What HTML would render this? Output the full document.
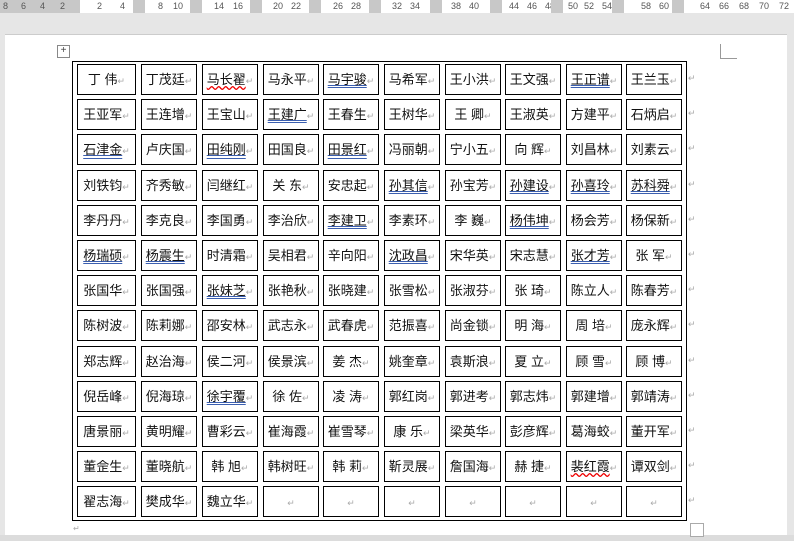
<!DOCTYPE html><html><head><meta charset="utf-8"><style>
body{margin:0;width:794px;height:541px;overflow:hidden;background:#e6e6e6;position:relative;font-family:"Liberation Sans","Noto Sans CJK SC",sans-serif}
#ruler{position:absolute;left:0;top:0;width:794px;height:13px;background:#fff;font-size:9px;color:#555;white-space:nowrap;overflow:hidden}
#ruler span{position:absolute;top:0;line-height:12px}
#ruler b{position:absolute;top:0;height:13px;width:12px;background:#c8c8c8}
#page{position:absolute;left:5px;top:34px;width:782px;height:500px;background:#fff;border-top:1px solid #ccc}
#tbl{position:absolute;left:72px;top:61px;width:615px;height:460px;border:1px solid #000;box-sizing:border-box}
.c{position:absolute;width:57px;height:31px;border:1px solid #000;box-sizing:border-box;font-size:13px;line-height:29px;text-align:center;color:#111;white-space:nowrap}
.c i{font-style:normal;color:#aaa;font-size:9px}
.r{position:absolute;left:688px;color:#aaa;font-size:9px}
.b{text-decoration:underline double #3b5fb0}
.w{text-decoration:underline wavy #e00}
#status{position:absolute;left:0;top:535px;width:794px;height:6px;background:#dcdcdc}
</style></head><body>
<div id="ruler"></div>
<div id="page"></div>
<div style="position:absolute;left:57px;top:45px;width:11px;height:11px;border:1px solid #888;font-size:10px;line-height:10px;text-align:center;color:#444">+</div>
<div style="position:absolute;left:720px;top:44px;width:16px;height:14px;border-left:1px solid #999;border-bottom:1px solid #999"></div>
<div id="tbl"></div>
<div id="cells"></div>
<div id="status"></div>
<script>
var rh='<div style="position:absolute;left:0;top:0;width:80px;height:13px;background:#c8c8c8"></div>';
[[3,"8"],[21,"6"],[40,"4"],[60,"2"],[97,"2"],[120,"4"],[158,"8"],[173,"10"],[214,"14"],[233,"16"],[273,"20"],[291,"22"],[333,"26"],[351,"28"],[392,"32"],[410,"34"],[451,"38"],[469,"40"],[509,"44"],[527,"46"],[545,"48"],[568,"50"],[584,"52"],[602,"54"],[641,"58"],[659,"60"],[700,"64"],[719,"66"],[739,"68"],[759,"70"],[779,"72"]].forEach(function(a){rh+='<span style="left:'+a[0]+'px">'+a[1]+'</span>';});
[66,133,190,250,309,369,430,490,551,612,672].forEach(function(x){rh+='<b style="left:'+x+'px"></b>';});
document.getElementById("ruler").innerHTML=rh;
var n=["丁 伟","丁茂廷","马长翟","马永平","马宇骏","马希军","王小洪","王文强","王正谱","王兰玉",
"王亚军","王连增","王宝山","王建广","王春生","王树华","王 卿","王淑英","方建平","石炳启",
"石津金","卢庆国","田纯刚","田国良","田景红","冯丽朝","宁小五","向 辉","刘昌林","刘素云",
"刘铁钧","齐秀敏","闫继红","关 东","安忠起","孙其信","孙宝芳","孙建设","孙喜玲","苏科舜",
"李丹丹","李克良","李国勇","李治欣","李建卫","李素环","李 巍","杨伟坤","杨会芳","杨保新",
"杨瑞硕","杨震生","时清霜","吴相君","辛向阳","沈政昌","宋华英","宋志慧","张才芳","张 军",
"张国华","张国强","张妹芝","张艳秋","张晓建","张雪松","张淑芬","张 琦","陈立人","陈春芳",
"陈树波","陈莉娜","邵安林","武志永","武春虎","范振喜","尚金锁","明 海","周 培","庞永辉",
"郑志辉","赵治海","侯二河","侯景滨","姜 杰","姚奎章","袁斯浪","夏 立","顾 雪","顾 博",
"倪岳峰","倪海琼","徐宇覆","徐 佐","凌 涛","郭红岗","郭进考","郭志炜","郭建增","郭靖涛",
"唐景丽","黄明耀","曹彩云","崔海霞","崔雪琴","康 乐","梁英华","彭彦辉","葛海蛟","董开军",
"董佱生","董晓航","韩 旭","韩树旺","韩 莉","靳灵展","詹国海","赫 捷","裴红霞","谭双剑",
"翟志海","樊成华","魏立华","","","","","","",""];
var blue={4:1,8:1,13:1,20:1,22:1,24:1,35:1,37:1,38:1,39:1,44:1,47:1,50:1,51:1,55:1,58:1,62:1,92:1};
var wavy={2:1,118:1};
var xs=[77,141,202,263,323,384,445,505,566,626],h="";
for(var i=0;i<130;i++){var r=Math.floor(i/10),c=i%10,y=64+r*35.2;
var t=n[i],cls=blue[i]?"b":(wavy[i]?"w":"");
h+='<div class="c" style="left:'+xs[c]+'px;top:'+y+'px;width:'+(c==0?59:56)+'px"><span class="'+cls+'">'+t+'</span><i>↵</i></div>';
if(c==9)h+='<div class="r" style="top:'+(y+9)+'px">↵</div>';}
document.getElementById("cells").innerHTML=h;
</script>
<div style="position:absolute;left:73px;top:524px;color:#aaa;font-size:8px">↵</div>
<div style="position:absolute;left:690px;top:523px;width:12px;height:12px;border:1px solid #aaa;background:#fff"></div>
</body></html>
